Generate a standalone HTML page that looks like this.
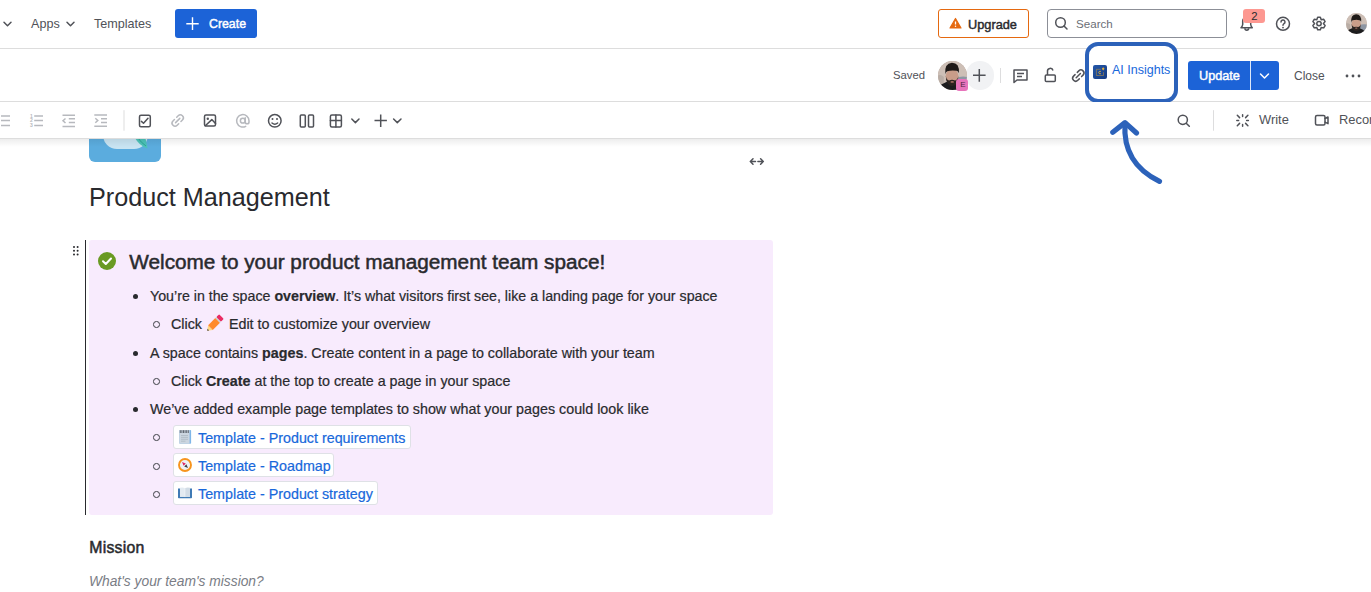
<!DOCTYPE html>
<html><head><meta charset="utf-8">
<style>
*{margin:0;padding:0;box-sizing:border-box}
html,body{width:1371px;height:592px;overflow:hidden;background:#fff;font-family:"Liberation Sans",sans-serif;color:#292A2E}
.a{position:absolute;white-space:nowrap;line-height:1}
svg{position:absolute;overflow:visible}
.c{font-size:14.3px;color:#292A2E;-webkit-text-stroke:0.2px currentColor}
.cb{position:absolute;left:153.3px;width:6.7px;height:6.7px;border-radius:50%;border:1.4px solid #3C3E44}
.card{position:absolute;left:173px;height:24px;background:#fff;border:1px solid #DFE1E6;border-radius:3px}
.lk{left:198px;color:#1868DB}
.emo{display:inline-block;height:10px}
.hl{position:absolute;left:0;width:1371px;height:1px;background:#DDDDDD}
</style></head><body>

<!-- ===== TOP NAV ===== -->
<svg style="left:0;top:0" width="1" height="1">
 <path d="M4 22.3 L7.5 25.8 L11 22.3" fill="none" stroke="#505258" stroke-width="1.5" stroke-linecap="round" stroke-linejoin="round"/>
 <path d="M67 22.3 L70.5 25.8 L74 22.3" fill="none" stroke="#505258" stroke-width="1.5" stroke-linecap="round" stroke-linejoin="round"/>
</svg>
<span class="a" id="t-apps" style="left:31px;top:17.8px;font-size:12.6px;color:#505258">Apps</span>
<span class="a" id="t-templates" style="left:94px;top:17.8px;font-size:12.6px;color:#505258">Templates</span>
<div style="position:absolute;left:175px;top:9px;width:82px;height:29px;background:#1C63D7;border-radius:3px"></div>
<svg style="left:0;top:0" width="1" height="1">
 <path d="M192.5 17.3 V30 M186.3 23.7 H198.7" stroke="#fff" stroke-width="1.4"/>
</svg>
<span class="a" id="t-create" style="left:209px;top:17.9px;font-size:12.33px;-webkit-text-stroke:0.45px #fff;color:#fff">Create</span>

<div style="position:absolute;left:938px;top:9px;width:91px;height:29px;border:1px solid #E56910;border-radius:3px"></div>
<svg style="left:0;top:0" width="1" height="1">
 <path d="M955.5 18.5 L961 28 H950 Z" fill="#E56910" stroke="#E56910" stroke-width="1.2" stroke-linejoin="round"/>
 <path d="M955.5 21.5 V24.5" stroke="#fff" stroke-width="1.3"/>
 <circle cx="955.5" cy="26.3" r="0.75" fill="#fff"/>
</svg>
<span class="a" id="t-upgrade" style="left:968px;top:18.9px;font-size:12.75px;-webkit-text-stroke:0.45px #292A2E;color:#292A2E">Upgrade</span>

<div style="position:absolute;left:1047px;top:9px;width:180px;height:29px;border:1px solid #8C8F97;border-radius:4px"></div>
<svg style="left:0;top:0" width="1" height="1">
 <circle cx="1060.5" cy="22.5" r="4.8" fill="none" stroke="#505258" stroke-width="1.5"/>
 <path d="M1064 26 L1067 29" stroke="#505258" stroke-width="1.5" stroke-linecap="round"/>
</svg>
<span class="a" id="t-search" style="left:1076px;top:18.3px;font-size:11.6px;color:#6B6E76">Search</span>

<!-- bell -->
<svg style="left:0;top:0" width="1" height="1">
 <path d="M1241 27.8 H1252.3 Q1251 26.5 1250.7 24.5 V21 A4 4 0 0 0 1242.7 21 V24.5 Q1242.4 26.5 1241 27.8 Z" fill="none" stroke="#505258" stroke-width="1.5" stroke-linejoin="round"/>
 <path d="M1244.9 28.3 A1.9 1.9 0 0 0 1248.7 28.3" fill="none" stroke="#505258" stroke-width="1.5"/>
</svg>
<div style="position:absolute;left:1243px;top:9px;width:22px;height:14px;background:#FD9891;border-radius:3px"></div>
<span class="a" style="left:1251.3px;top:10.6px;font-size:11.3px;color:#292A2E">2</span>
<!-- help -->
<svg style="left:0;top:0" width="1" height="1">
 <circle cx="1283" cy="23.8" r="6.5" fill="none" stroke="#505258" stroke-width="1.5"/>
 <path d="M1281 22 A2 2 0 1 1 1283.8 23.8 Q1283 24.3 1283 25.3" fill="none" stroke="#505258" stroke-width="1.5" stroke-linecap="round"/>
 <circle cx="1283" cy="27.6" r="0.9" fill="#505258"/>
</svg>
<!-- gear -->
<svg style="left:0;top:0" width="1" height="1">
 <path d="M1317.67 17.34 L1320.33 17.34 L1321.20 19.79 L1323.76 19.32 L1325.09 21.62 L1323.40 23.60 L1325.09 25.58 L1323.76 27.88 L1321.20 27.41 L1320.33 29.86 L1317.67 29.86 L1316.80 27.41 L1314.24 27.88 L1312.91 25.58 L1314.60 23.60 L1312.91 21.62 L1314.24 19.32 L1316.80 19.79 Z" fill="none" stroke="#505258" stroke-width="1.5" stroke-linejoin="round"/>
 <circle cx="1319" cy="23.6" r="2.2" fill="none" stroke="#505258" stroke-width="1.5"/>
</svg>
<!-- avatar top -->
<div id="av1" style="position:absolute;left:1346px;top:13px;width:21px;height:21px;border-radius:50%;overflow:hidden;background:#C9B7AE"><svg viewBox="0 0 100 100" width="100%" height="100%" style="position:static;display:block">
 <rect width="100" height="100" fill="#CDBFB6"/>
 <path d="M60 60 Q80 50 100 55 V100 H60 Z" fill="#8D96A3"/>
 <path d="M0 50 Q10 45 20 55 V100 H0 Z" fill="#B9ADA5"/>
 <ellipse cx="47" cy="104" rx="48" ry="34" fill="#1C1C1E"/>
 <ellipse cx="48.5" cy="53" rx="22" ry="26" fill="#C99D89"/>
 <path d="M27 52 Q27 85 48.5 87 Q70 85 70 52 Q67 67 59 67 Q48.5 63 38 67 Q30 67 27 52 Z" fill="#2B2320"/>
 <path d="M25 46 Q21 8 48 6 Q75 6 72 42 Q70 35 64 34 Q48 31 32 35 Q27 37 25 46 Z" fill="#1F1A18"/>
 <ellipse cx="49" cy="72" rx="6" ry="3" fill="#A56F63"/>
</svg></div>

<div class="hl" style="top:48px"></div>

<!-- ===== SECOND BAR ===== -->
<span class="a" id="t-saved" style="left:893px;top:70.4px;font-size:11.3px;color:#505258">Saved</span>
<div style="position:absolute;left:965.5px;top:61.2px;width:28.5px;height:28.5px;border-radius:50%;background:#F1F2F4"></div>
<div id="av2" style="position:absolute;left:938px;top:61px;width:29px;height:29px;border-radius:50%;overflow:hidden;background:#B9A79E"><svg viewBox="0 0 100 100" width="100%" height="100%" style="position:static;display:block">
 <rect width="100" height="100" fill="#CDBFB6"/>
 <path d="M60 60 Q80 50 100 55 V100 H60 Z" fill="#8D96A3"/>
 <path d="M0 50 Q10 45 20 55 V100 H0 Z" fill="#B9ADA5"/>
 <ellipse cx="47" cy="104" rx="48" ry="34" fill="#1C1C1E"/>
 <ellipse cx="48.5" cy="53" rx="22" ry="26" fill="#C99D89"/>
 <path d="M27 52 Q27 85 48.5 87 Q70 85 70 52 Q67 67 59 67 Q48.5 63 38 67 Q30 67 27 52 Z" fill="#2B2320"/>
 <path d="M25 46 Q21 8 48 6 Q75 6 72 42 Q70 35 64 34 Q48 31 32 35 Q27 37 25 46 Z" fill="#1F1A18"/>
 <ellipse cx="49" cy="72" rx="6" ry="3" fill="#A56F63"/>
</svg></div>
<svg style="left:0;top:0" width="1" height="1">
 <path d="M979.3 69 V81.7 M973 75.3 H985.6" stroke="#505258" stroke-width="1.5"/>
</svg>
<div style="position:absolute;left:956px;top:79px;width:12px;height:12px;border-radius:3px;background:#E774BB"></div>
<span class="a" style="left:960.2px;top:81.2px;font-size:8px;color:#50253F">E</span>
<div style="position:absolute;left:1000px;top:68px;width:1px;height:15px;background:#DDDDDE"></div>
<!-- comment -->
<svg style="left:0;top:0" width="1" height="1">
 <path d="M1014 70 H1027 V80 H1017 L1014 82.5 Z" fill="none" stroke="#505258" stroke-width="1.5" stroke-linejoin="round"/>
 <path d="M1017 73.5 H1024 M1017 76.5 H1022" stroke="#505258" stroke-width="1.5"/>
</svg>
<!-- unlock -->
<svg style="left:0;top:0" width="1" height="1">
 <rect x="1045.3" y="75" width="10" height="6.5" rx="1" fill="none" stroke="#505258" stroke-width="1.5"/>
 <path d="M1047.5 75 V71.5 A2.8 2.8 0 0 1 1053 70.5" fill="none" stroke="#505258" stroke-width="1.5"/>
</svg>
<!-- link -->
<svg style="left:0;top:0" width="1" height="1">
 <path transform="translate(1078.3 75.6) rotate(-45)" d="M-1.6 -3 H-3.7 A3 3 0 0 0 -3.7 3 H-1.6 M1.6 -3 H3.7 A3 3 0 0 1 3.7 3 H1.6 M-3 0 H3" fill="none" stroke="#505258" stroke-width="1.5" stroke-linecap="round"/>
</svg>

<div class="hl" style="top:101px"></div>

<!-- highlight box -->
<div style="position:absolute;left:1084.9px;top:41.7px;width:93.3px;height:61.2px;border:4.2px solid #2C62BA;border-radius:13px;background:#fff"></div>
<svg style="left:1093px;top:65px" width="14" height="14" viewBox="0 0 14 14">
 <defs><linearGradient id="g1" x1="0" y1="0" x2="1" y2="1"><stop offset="0" stop-color="#2457A8"/><stop offset="1" stop-color="#163B82"/></linearGradient></defs>
 <rect x="0" y="0" width="14" height="14" rx="2" fill="url(#g1)"/>
 <path d="M7.8 4.3 H3.4 V10.5 H10.5 V7.2" fill="none" stroke="#C99A38" stroke-width="0.6" opacity="0.85"/>
 <path d="M7.9 6.6 A1.25 1.3 0 1 0 7.9 8.5" fill="none" stroke="#E0AE3C" stroke-width="0.9"/>
 <path d="M10.2 2.2 L11.6 3.8 L10.2 5.4 L8.8 3.8 Z" fill="#E8B23C"/>
</svg>
<span class="a" id="t-ai" style="left:1112px;top:64.2px;font-size:12.5px;color:#1868DB">AI Insights</span>

<!-- update -->
<div style="position:absolute;left:1188px;top:61px;width:91px;height:29px;background:#1C63D7;border-radius:3px"></div>
<div style="position:absolute;left:1250px;top:61px;width:1px;height:29px;background:#fff;opacity:.85"></div>
<span class="a" id="t-update" style="left:1199px;top:70px;font-size:12.7px;-webkit-text-stroke:0.45px #fff;color:#fff">Update</span>
<svg style="left:0;top:0" width="1" height="1">
 <path d="M1260.5 74 L1264.5 78 L1268.5 74" fill="none" stroke="#fff" stroke-width="1.5" stroke-linecap="round" stroke-linejoin="round"/>
</svg>
<span class="a" id="t-close" style="left:1294px;top:69.5px;font-size:12px;color:#505258">Close</span>
<svg style="left:0;top:0" width="1" height="1">
 <circle cx="1347" cy="76" r="1.4" fill="#505258"/><circle cx="1353" cy="76" r="1.4" fill="#505258"/><circle cx="1359" cy="76" r="1.4" fill="#505258"/>
</svg>

<!-- ===== TOOLBAR ===== -->
<div style="position:absolute;left:0;top:102px;width:1371px;height:36px;background:#fff;z-index:2">
<svg style="left:0;top:0" width="1" height="1" id="tb">
 <g fill="none" stroke="#B7B9BE" stroke-width="1.5">
  <path d="M1 14 H10 M1 18.5 H10 M1 23.4 H10"/>
  <path d="M34.2 14 H43 M34.2 18.5 H43 M34.2 23.4 H43"/>
  <path d="M62.5 13.2 H75 M68.8 16.8 H75 M68.8 20.6 H75 M62.5 24.4 H75 M65.5 16.5 L63 18.7 L65.5 21"/>
  <path d="M94.3 13.1 H107 M101 16.8 H107 M101 20.5 H107 M94.3 24.2 H107 M95.3 16.3 L97.8 18.5 L95.3 20.8"/>
  <path transform="translate(177.7 18.5) rotate(-45)" stroke-linecap="round" d="M-1.6 -3 H-3.7 A3 3 0 0 0 -3.7 3 H-1.6 M1.6 -3 H3.7 A3 3 0 0 1 3.7 3 H1.6 M-3 0 H3"/>
  <path stroke-linecap="round" d="M245.7 24.3 A6.2 6.2 0 1 1 249 18.8 V19.9 A1.9 1.9 0 0 1 245.2 19.9 V15.8"/><circle cx="242.8" cy="18.7" r="2.4"/>
 </g>
 <g fill="#B7B9BE" stroke="none" font-family="Liberation Sans" font-size="5" font-weight="bold">
  <text x="30" y="15.5">1</text><text x="30" y="20">2</text><text x="30" y="24.5">3</text>
 </g>
 <rect x="123.5" y="8.2" width="1" height="20.5" fill="#DDDDDE"/>
 <g fill="none" stroke="#505258" stroke-width="1.5" stroke-linecap="round" stroke-linejoin="round">
  <rect x="139.5" y="13.3" width="10.8" height="11.5" rx="1.5"/>
  <path d="M141.4 19.4 L143.5 21.3 L148 16.2"/>
  <rect x="204.5" y="13.1" width="11" height="11" rx="1.5"/>
  <path d="M205.3 23.8 L211.8 17.6 L215.5 21.6"/>
  <circle cx="274.8" cy="18.8" r="6.3"/>
  <path d="M272 21 Q274.8 23.5 277.6 21"/>
  <rect x="300.3" y="13" width="5" height="12" rx="1"/>
  <rect x="308.5" y="13" width="5" height="12" rx="1"/>
  <rect x="330.4" y="13" width="11" height="12" rx="1.5"/>
  <path d="M335.9 13 V25 M330.4 18.6 H341.4"/>
  <path d="M351.8 17 L355.4 20.6 L359 17"/>
  <path d="M380.7 12.4 V24.9 M374.5 18.6 H386.9" stroke-linecap="butt"/>
  <path d="M393.6 17 L397.3 20.6 L401 17"/>
 </g>
 <g fill="#505258"><circle cx="207.8" cy="16.8" r="1.2"/><circle cx="272.5" cy="17" r="1"/><circle cx="277" cy="17" r="1"/></g>
</svg>
<svg style="left:0;top:0" width="1" height="1">
 <g fill="none" stroke="#505258" stroke-width="1.5" stroke-linecap="round" stroke-linejoin="round">
  <circle cx="1182.8" cy="17.8" r="4.6"/>
  <path d="M1186.2 21.2 L1189.3 24.3"/>
  <path d="M1242.6 12.8 V14.6 M1242.6 22.4 V24.2 M1236.8 18.5 H1238.6 M1246.6 18.5 H1248.4 M1237.3 13.3 L1239.6 15.6 M1245.6 21.4 L1247.9 23.7 M1247.9 13.3 L1245.6 15.6 M1239.6 21.4 L1237.3 23.7"/>
  <rect x="1315.5" y="13.6" width="9.5" height="9.5" rx="1.5"/>
  <path d="M1325 16.5 L1328 15 V21.7 L1325 20.2"/>
 </g>
 <rect x="1213" y="8.2" width="1" height="20.5" fill="#DDDDDE"/>
</svg>
<span class="a" id="t-write" style="left:1259px;top:12.4px;font-size:12.9px;color:#505258">Write</span>
<span class="a" id="t-record" style="left:1339px;top:12.4px;font-size:12.9px;color:#505258">Record</span>
</div>

<div class="hl" style="top:138px;z-index:2"></div>
<div style="position:absolute;left:0;top:139px;width:1371px;height:8px;background:linear-gradient(rgba(0,0,0,.07),rgba(0,0,0,0));z-index:2"></div>
<!-- ===== CONTENT ===== -->
<div id="spaceicon" style="position:absolute;left:89px;top:138px;width:72px;height:24px;overflow:hidden">
 <div style="position:absolute;left:0;top:-48px;width:72px;height:72px;border-radius:6px;background:#5BACDE"></div>
 <div style="position:absolute;left:13.5px;top:-30px;width:45px;height:40.6px;border-radius:0 0 14px 14px;background:#C8E4F2"></div>
 <svg style="left:0;top:0" width="72" height="24"><path d="M46 0 Q50 7.5 58.5 10.6 Q57.5 4 56.4 0 Z" fill="#4CC3B8"/><path d="M49 0 Q52 4.5 57 8" stroke="#2FA396" stroke-width="1" fill="none"/></svg>
</div>
<svg style="left:0;top:0" width="1" height="1">
 <path d="M750.3 161.5 H755.5 M757.9 161.5 H763.3 M753 158.8 L750.3 161.5 L753 164.2 M760.6 158.8 L763.3 161.5 L760.6 164.2" fill="none" stroke="#505258" stroke-width="1.5" stroke-linecap="round" stroke-linejoin="round"/>
</svg>

<span class="a" id="t-title" style="left:89px;top:184.6px;font-size:25.2px;color:#292A2E">Product Management</span>

<svg style="left:0;top:0" width="1" height="1">
 <g fill="#292A2E"><circle cx="74" cy="247.1" r="1"/><circle cx="77.6" cy="247.1" r="1"/><circle cx="74" cy="250.8" r="1"/><circle cx="77.6" cy="250.8" r="1"/><circle cx="74" cy="254.4" r="1"/><circle cx="77.6" cy="254.4" r="1"/></g>
</svg>
<div style="position:absolute;left:85px;top:240px;width:1px;height:275px;background:#292A2E"></div>
<div style="position:absolute;left:89px;top:240px;width:684px;height:275px;background:#F8EBFD;border-radius:3px"></div>

<svg style="left:0;top:0" width="1" height="1">
 <circle cx="107" cy="261" r="9" fill="#6A9A23"/>
 <path d="M103 261.3 L105.8 264 L111 258.5" fill="none" stroke="#fff" stroke-width="2" stroke-linecap="round" stroke-linejoin="round"/>
</svg>
<span class="a" id="t-welcome" style="left:129.3px;top:251.6px;font-size:20.75px;-webkit-text-stroke:0.5px #292A2E;color:#292A2E">Welcome to your product management team space!</span>


<div style="position:absolute;left:133px;top:293.5px;width:5px;height:5px;border-radius:50%;background:#292A2E"></div>
<span class="a c" id="l1" style="left:150px;top:288.55px;font-size:14.22px">You’re in the space <b>overview</b>. It’s what visitors first see, like a landing page for your space</span>
<div class="cb" style="top:321.1px"></div>
<span class="a c" id="l2" style="left:171px;top:316.6px">Click <span class="emo" style="width:19px"></span> Edit to customize your overview</span>
<div style="position:absolute;left:133px;top:350.5px;width:5px;height:5px;border-radius:50%;background:#292A2E"></div>
<span class="a c" id="l3" style="left:150px;top:345.5px">A space contains <b>pages</b>. Create content in a page to collaborate with your team</span>
<div class="cb" style="top:378.1px"></div>
<span class="a c" id="l4" style="left:171px;top:374px">Click <b>Create</b> at the top to create a page in your space</span>
<div style="position:absolute;left:133px;top:407px;width:5px;height:5px;border-radius:50%;background:#292A2E"></div>
<span class="a c" id="l5" style="left:150px;top:402px">We’ve added example page templates to show what your pages could look like</span>

<div class="cb" style="top:433.9px"></div>
<div class="card" style="top:425px;width:238px"></div>
<span class="a c lk" id="k1" style="top:431px">Template - Product requirements</span>
<div class="cb" style="top:463.1px"></div>
<div class="card" style="top:452.5px;width:161px"></div>
<span class="a c lk" id="k2" style="top:459px">Template - Roadmap</span>
<div class="cb" style="top:490.9px"></div>
<div class="card" style="top:480.5px;width:205px"></div>
<span class="a c lk" id="k3" style="top:487px">Template - Product strategy</span>


<svg style="left:0;top:0" width="1" height="1">
 <g transform="translate(207.2 330.8) rotate(-45)">
  <path d="M0 0 L4.6 -3.3 V3.3 Z" fill="#FFD983"/>
  <path d="M0 0 L1.6 -1.15 V1.15 Z" fill="#3B3B3B"/>
  <rect x="4.6" y="-3.3" width="10.2" height="6.6" fill="#FF8A2A"/>
  <rect x="14.8" y="-3.3" width="1.4" height="6.6" fill="#C7D3D6"/>
  <rect x="16.2" y="-3.3" width="4" height="6.6" rx="1" fill="#EA2B62"/>
 </g>
 <g>
  <rect x="179.3" y="430" width="11.8" height="13.7" rx="0.8" fill="#7FB6E8"/>
  <rect x="179.3" y="430" width="10.3" height="13.7" rx="0.5" fill="#CCD6E0"/>
  <path d="M180.3 430.2 V433 M181.9 430.2 V433 M183.5 430.2 V433 M185.1 430.2 V433 M186.7 430.2 V433 M188.3 430.2 V433" stroke="#5F6770" stroke-width="1"/>
  <path d="M181 435.5 H188 M181 437.4 H188 M181 439.3 H188 M181 441.2 H185.5" stroke="#A9B4BF" stroke-width="0.7"/>
 </g>
 <g>
  <circle cx="185" cy="465" r="6" fill="#EEF1F4" stroke="#F7941D" stroke-width="1.9"/>
  <path d="M182 462 L185.8 463.6 L183.6 465.8 Z" fill="#E0245E"/>
  <path d="M188 468 L184.2 466.4 L186.4 464.2 Z" fill="#3B3F45"/>
 </g>
 <g>
  <path d="M178 488.5 H180 V496.8 H184.5 Q185 497.5 185.5 496.8 H190 V488.5 H192 V497.5 Q192 498.3 191.2 498.3 H178.8 Q178 498.3 178 497.5 Z" fill="#3F7AB5"/>
  <path d="M180 487.8 Q182.5 487 184.8 488 V496.8 H180 Z" fill="#E3EAF1"/>
  <path d="M185.2 488 Q187.5 487 190 487.8 V496.8 H185.2 Z" fill="#D2DCE6"/>
 </g>
</svg>
<span class="a" id="t-mission" style="left:89.3px;top:540.3px;font-size:15.8px;letter-spacing:0.25px;-webkit-text-stroke:0.5px #292A2E;color:#292A2E">Mission</span>
<span class="a" id="t-ph" style="left:89px;top:574.8px;font-size:13.8px;font-style:italic;color:#7A7D85">What's your team's mission?</span>

<svg style="left:0;top:0;z-index:5" width="1" height="1">
 <g fill="none" stroke="#2C62BA" stroke-width="5.2" stroke-linecap="round" stroke-linejoin="round">
  <path d="M1159.5 181.3 C1138 171 1123 154 1125 123.5"/>
  <path d="M1112.8 132.3 L1125 122.6 L1136.5 133"/>
 </g>
</svg>
</body></html>
